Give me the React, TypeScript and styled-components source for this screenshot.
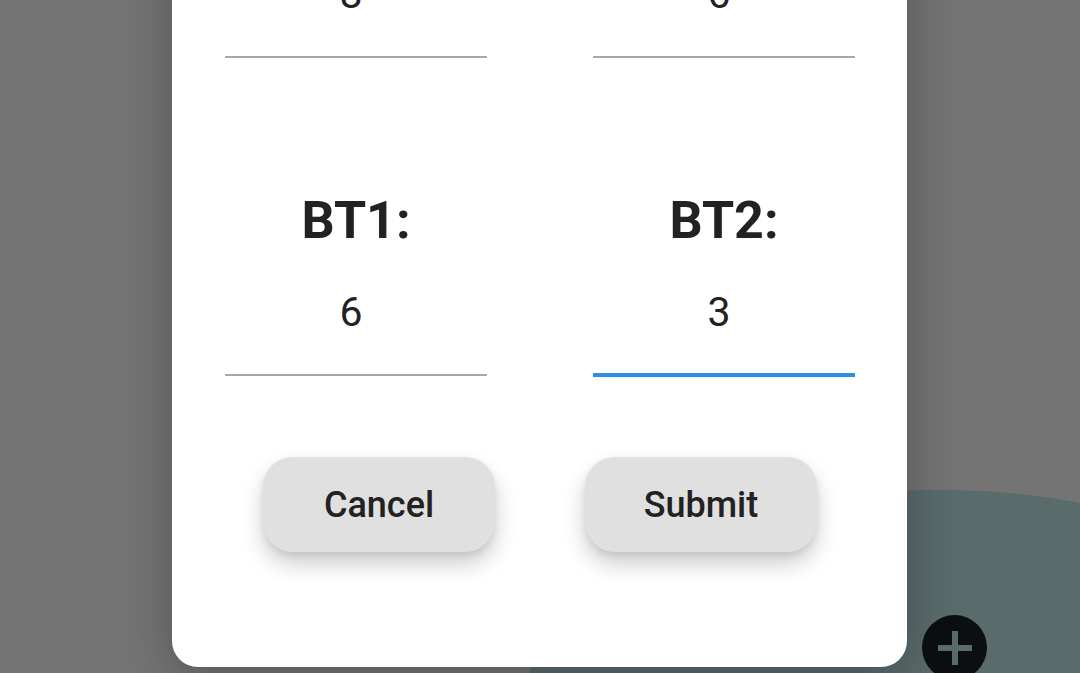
import React from "react";
import styled, { createGlobalStyle } from "styled-components";

const GlobalStyle = createGlobalStyle`
  html, body {
    margin: 0;
    padding: 0;
    background: #747474;
  }
  body {
    font-family: Roboto, "Liberation Sans", Arial, sans-serif;
  }
`;

const Screen = styled.div`
  position: relative;
  width: 1080px;
  height: 673px;
  overflow: hidden;
  background: #747474;
  display: flex;
  justify-content: center;
  align-items: flex-end;
  padding: 0 1px 6px 0;
  box-sizing: border-box;
`;

const Blob = styled.div`
  position: absolute;
  left: 522px;
  top: 490px;
  width: 836px;
  height: 452px;
  border-radius: 50%;
  background: #5a6b6c;
`;

const Fab = styled.div`
  position: absolute;
  left: 922px;
  top: 615px;
  width: 65px;
  height: 65px;
  border-radius: 50%;
  background: #0c0f10;
  display: flex;
  align-items: center;
  justify-content: center;
`;

const Dialog = styled.div`
  position: relative;
  z-index: 1;
  flex-shrink: 0;
  width: 735px;
  box-sizing: border-box;
  padding: 40px 52px 115px 53px;
  background: #ffffff;
  border-radius: 0 0 26px 26px;
  box-shadow: 0 10px 50px rgba(0, 0, 0, 0.28);
`;

const FieldGrid = styled.div`
  display: grid;
  grid-template-columns: 262px 262px;
  column-gap: 106px;
  row-gap: 132px;
`;

const Field = styled.div`
  display: flex;
  flex-direction: column;
  align-items: stretch;
`;

const Label = styled.div`
  font-size: 52px;
  line-height: 62px;
  font-weight: 700;
  color: #222222;
  text-align: center;
  margin-bottom: 36px;
`;

const Value = styled.div<{ $focused?: boolean }>`
  font-size: 41px;
  line-height: 48px;
  font-weight: 400;
  color: #222222;
  text-align: center;
  padding-right: 10px;
  padding-bottom: ${({ $focused }) => ($focused ? "37px" : "38px")};
  border-bottom: ${({ $focused }) => ($focused ? "4px solid #2b8fe2" : "2px solid #a6a6a6")};
  margin-bottom: ${({ $focused }) => ($focused ? "-1px" : "0")};
`;

const ButtonRow = styled.div`
  display: flex;
  justify-content: center;
  gap: 90px;
  margin-top: 81px;
`;

const Button = styled.button`
  width: 232px;
  height: 95px;
  border: none;
  border-radius: 30px;
  background: #e0e0e0;
  color: #222222;
  font-family: Roboto, "Liberation Sans", Arial, sans-serif;
  font-size: 36px;
  font-weight: 500;
  box-shadow: 0 12px 22px rgba(0, 0, 0, 0.2), 0 3px 6px rgba(0, 0, 0, 0.08);
  cursor: pointer;
`;

const PlusIcon = () => (
  <svg width="34" height="34" viewBox="0 0 34 34">
    <rect x="14" y="0" width="6" height="34" fill="#5a6b6c" />
    <rect x="0" y="14" width="34" height="6" fill="#5a6b6c" />
  </svg>
);

const fields = [
  { label: "AT1:", value: "8" },
  { label: "AT2:", value: "6" },
  { label: "BT1:", value: "6" },
  { label: "BT2:", value: "3", focused: true },
];

const App: React.FC = () => {
  return (
    <>
      <GlobalStyle />
      <Screen>
        <Blob />
        <Fab>
          <PlusIcon />
        </Fab>
        <Dialog>
          <FieldGrid>
            {fields.map((f) => (
              <Field key={f.label}>
                <Label>{f.label}</Label>
                <Value $focused={f.focused}>{f.value}</Value>
              </Field>
            ))}
          </FieldGrid>
          <ButtonRow>
            <Button>Cancel</Button>
            <Button>Submit</Button>
          </ButtonRow>
        </Dialog>
      </Screen>
    </>
  );
};

export default App;
